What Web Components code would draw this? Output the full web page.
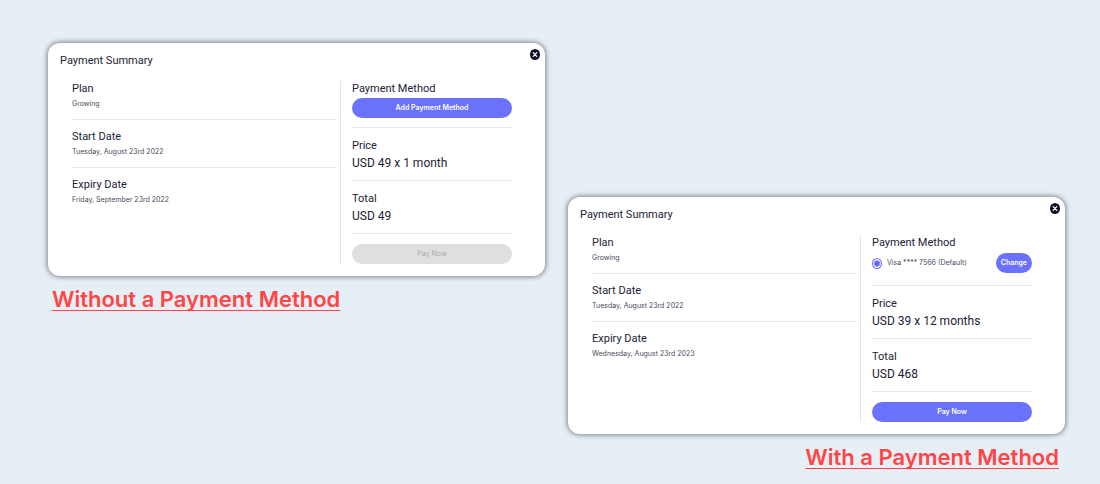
<!DOCTYPE html>
<html lang="en">
<head>
<meta charset="utf-8">
<title>Payment Summary</title>
<style>
  body { margin: 0; background: #e7eff6; font-family: Inter, "Open Sans", sans-serif; color: #1b2236; }
</style>
</head>
<body>
<payment-comparison></payment-comparison>

<script>
const define = (name, html, setup) => {
  const template = document.createElement('template');
  template.innerHTML = html;
  customElements.define(name, class extends HTMLElement {
    constructor() {
      super();
      this.attachShadow({ mode: 'open' }).append(template.content.cloneNode(true));
    }
    connectedCallback() { if (setup) setup(this, this.shadowRoot); }
  });
};

define('detail-item', `
  <style>
    :host { display: block; padding: 9px 0; border-bottom: 1px solid #e9e9eb; }
    :host(:first-child) { padding-top: 0; }
    :host([last]) { border-bottom: 0; }
    :host([large]) { padding: 10px 0 8px; }
    h3 { margin: 0; font: 400 11px/16px Roboto, sans-serif; }
    .value { font: 400 7px/13px Inter, sans-serif; color: #474c5c; }
    :host([large]) .value { font: 400 12px/18px Roboto, sans-serif; color: #1b2236; }
    :host([control]) .value { padding-top: 1px; }
  </style>
  <h3><slot name="label"></slot></h3>
  <div class="value"><slot></slot></div>
`);

define('pill-button', `
  <style>
    :host { display: block; }
    button { display: block; width: 100%; height: 20px; padding: 0 5px; border: 0; border-radius: 10px;
      background: #6a72fb; color: #fff; font: 600 7px/20px Inter, sans-serif; }
    button:disabled { background: #dfdfdf; color: #a9a9ad; font-weight: 400; }
  </style>
  <button type="button"><slot></slot></button>
`, (host, root) => { root.querySelector('button').disabled = host.hasAttribute('disabled'); });

define('saved-card', `
  <style>
    :host { display: flex; align-items: center; justify-content: space-between; padding: 1px 0 3px; }
    label { display: flex; align-items: center; gap: 5px; font: 400 7px/12px Inter, sans-serif; color: #474c5c; }
    input { appearance: none; box-sizing: border-box; width: 10px; height: 11px; margin: 0;
      border: 1px solid #6a72fb; border-radius: 50%; background: #fff; }
    input:checked { background: radial-gradient(circle, #5a63f5 2px, #fff 4px); }
  </style>
  <label><input type="radio" name="method" checked><span><slot></slot></span></label>
  <pill-button>Change</pill-button>
`);

define('summary-card', `
  <style>
    :host { display: block; background: #fff; border-radius: 12px; box-shadow: 0 0 5px 1px rgba(20, 26, 32, .5); }
    header { display: flex; justify-content: space-between; align-items: flex-start; padding: 6px 5px 10px 12px; }
    h2 { margin: 0; padding-top: 2px; font: 400 11px/20px Roboto, sans-serif; }
    .close { display: block; width: 10px; height: 11px; padding: 0; border: 0; background: none; }
    svg { display: block; }
    .body { display: grid; grid-template-columns: 1fr 172px; gap: 3px; padding: 0 33px 12px 24px; }
    .side { padding-left: 11px; border-left: 1px solid #e4e4e7; }
  </style>
  <header>
    <h2>Payment Summary</h2>
    <button class="close" type="button" aria-label="Close">
      <svg width="10" height="11" viewBox="0 0 10 11" preserveAspectRatio="none">
        <ellipse cx="5" cy="5.5" rx="5" ry="5.5" fill="#0b1024"/>
        <path d="M3.2 3.6l3.6 3.8M6.8 3.6l-3.6 3.8" stroke="#fff" stroke-width="1.3" stroke-linecap="round"/>
      </svg>
    </button>
  </header>
  <div class="body">
    <div><slot name="plan"></slot></div>
    <div class="side"><slot name="payment"></slot></div>
  </div>
`);

define('captioned-example', `
  <style>
    :host { display: block; }
    figure { margin: 0; }
    figcaption { padding: 10px 6px 0 4px; font-size: 22px; line-height: 26px; font-weight: 600; color: #ff4545;
      text-decoration: underline; text-decoration-thickness: 1px; text-underline-offset: 3px; text-decoration-skip-ink: none; }
    :host([caption-end]) figcaption { text-align: right; }
  </style>
  <figure>
    <slot></slot>
    <figcaption><slot name="caption"></slot></figcaption>
  </figure>
`);

define('payment-comparison', `
  <style>
    :host { display: grid; grid-template-columns: 1fr 1fr; gap: 23px; padding: 43px 35px 10px 48px; }
    .lower { margin-top: 154px; }
    .action { padding-top: 10px; }
  </style>
  <captioned-example>
    <summary-card>
      <div slot="plan">
        <detail-item><span slot="label">Plan</span>Growing</detail-item>
        <detail-item><span slot="label">Start Date</span>Tuesday, August 23rd 2022</detail-item>
        <detail-item last><span slot="label">Expiry Date</span>Friday, September 23rd 2022</detail-item>
      </div>
      <div slot="payment">
        <detail-item control><span slot="label">Payment Method</span><pill-button>Add Payment Method</pill-button></detail-item>
        <detail-item large><span slot="label">Price</span>USD 49 x 1 month</detail-item>
        <detail-item large><span slot="label">Total</span>USD 49</detail-item>
        <pill-button class="action" disabled>Pay Now</pill-button>
      </div>
    </summary-card>
    <span slot="caption">Without a Payment Method</span>
  </captioned-example>
  <captioned-example class="lower" caption-end>
    <summary-card>
      <div slot="plan">
        <detail-item><span slot="label">Plan</span>Growing</detail-item>
        <detail-item><span slot="label">Start Date</span>Tuesday, August 23rd 2022</detail-item>
        <detail-item last><span slot="label">Expiry Date</span>Wednesday, August 23rd 2023</detail-item>
      </div>
      <div slot="payment">
        <detail-item control><span slot="label">Payment Method</span><saved-card>Visa **** 7566 (Default)</saved-card></detail-item>
        <detail-item large><span slot="label">Price</span>USD 39 x 12 months</detail-item>
        <detail-item large><span slot="label">Total</span>USD 468</detail-item>
        <pill-button class="action">Pay Now</pill-button>
      </div>
    </summary-card>
    <span slot="caption">With a Payment Method</span>
  </captioned-example>
`);
</script>
</body>
</html>
